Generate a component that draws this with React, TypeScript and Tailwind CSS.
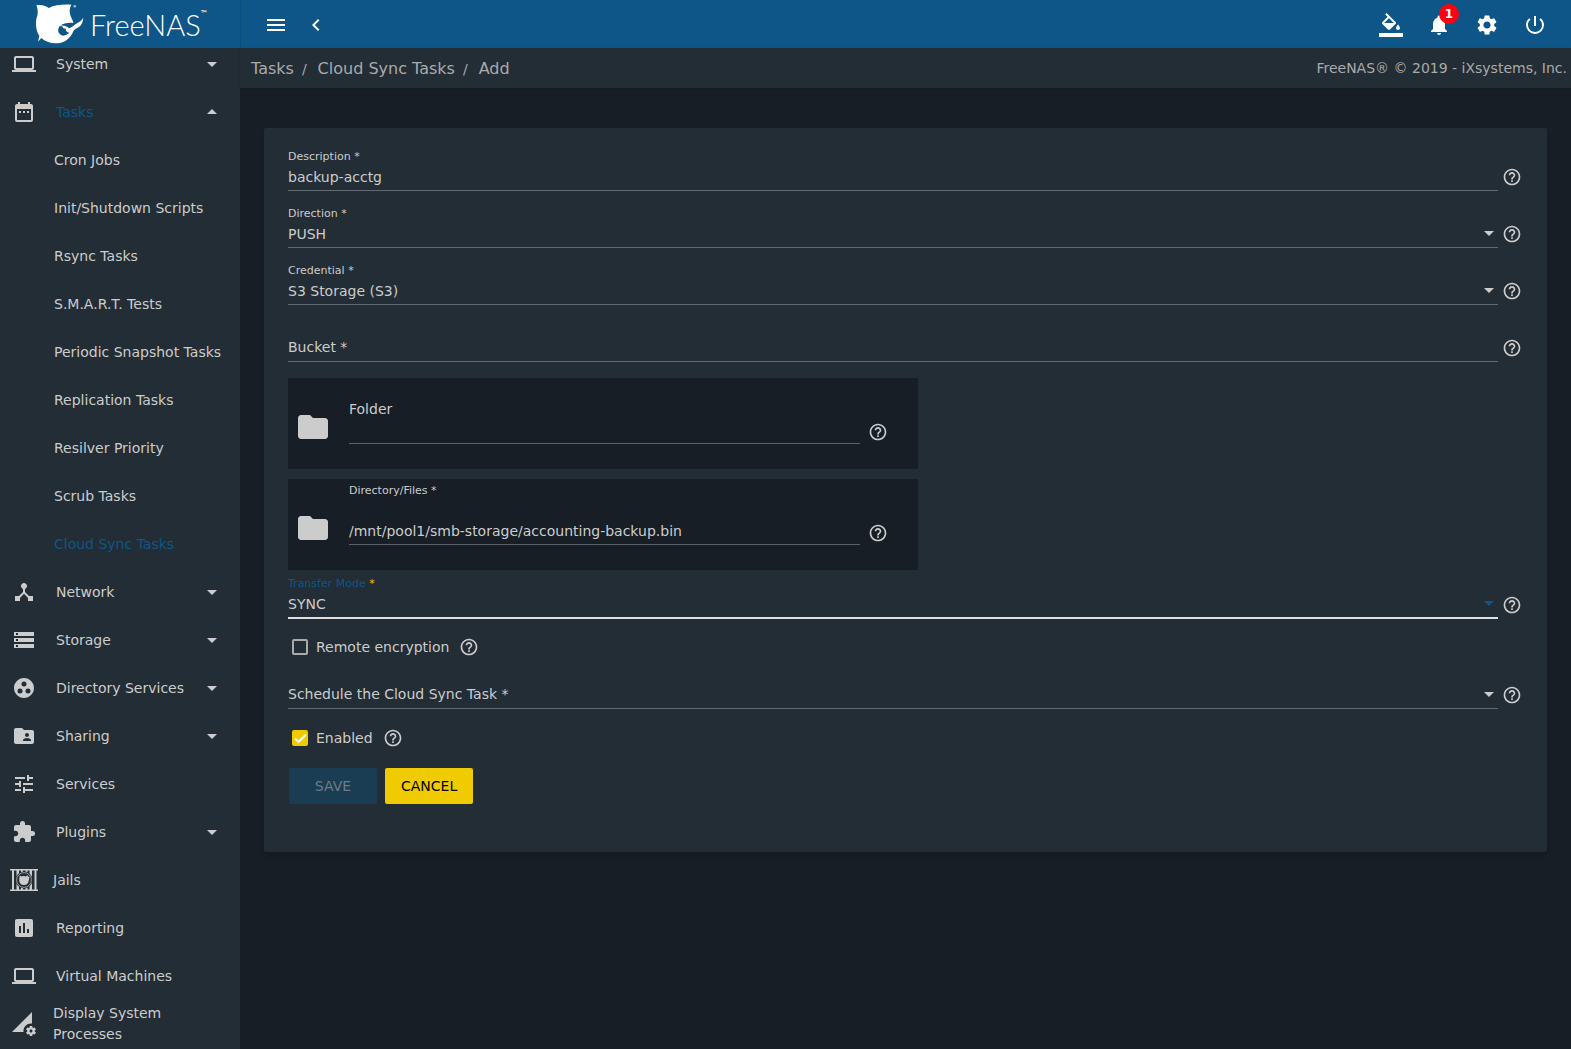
import { useState } from "react"
import type { ReactNode } from "react"
import type { IconType } from "react-icons"
import {
    MdArrowDropDown,
    MdArrowDropUp,
    MdAssessment,
    MdChevronLeft,
    MdDateRange,
    MdDeviceHub,
    MdExtension,
    MdFolder,
    MdFolderShared,
    MdGroupWork,
    MdHelpOutline,
    MdLaptop,
    MdMenu,
    MdNotifications,
    MdPermDataSetting,
    MdPowerSettingsNew,
    MdSettings,
    MdStorage,
    MdTune,
} from "react-icons/md"

const JailIcon = () => (
    <svg viewBox="0 0 28 24" className="h-6 w-7" fill="currentColor">
        <path d="M0 1h28v1.6H0zM0 21.4h28V23H0zM2 2h2v20H2zM6.5 2h2.5v20H6.5zM11 2h2v20h-2zM15.5 2h2v20h-2zM19.5 2H22v20h-2.5zM24.5 2h2v20h-2z" />
        <circle cx="14" cy="12" r="8.5" fill="#232d35" />
        <circle cx="14" cy="12" r="7.4" fill="none" stroke="currentColor" strokeWidth="1" opacity="0.7" />
        <path d="M9.5 7.5L12 8.5C13.5 7.8 15 8 16 8.6L17.5 7L18 9L19.5 8.2C19.3 10 19 11 18.8 12.5C18.4 15.5 16.5 17 14 17C11 17 9.2 15 9.2 12.4C9.2 10.500 9.8 9 9.500 7.500Z" />
    </svg>
)

const FillIcon = () => (
    <svg viewBox="0 0 24 24" className="size-6" fill="currentColor">
        <path d="M16.56 8.94L7.62 0 6.21 1.41l2.38 2.38-5.15 5.15c-.59.59-.59 1.54 0 2.12l5.5 5.5c.29.29.68.44 1.06.44s.77-.15 1.06-.44l5.5-5.5c.59-.58.59-1.53 0-2.12zM5.21 10L10 5.21 14.79 10H5.21zM19 11.5s-2 2.17-2 3.500c0 1.1.9 2 2 2s2-.9 2-2c0-1.33-2-3.5-2-3.5zM0 20h24v4H0z" />
    </svg>
)

const Logo = () => (
    <a href="#" className="flex h-12 w-60 shrink-0 items-center pl-9 text-white">
        <svg viewBox="108 8 146 122" className="h-10 w-12" fill="currentColor">
            <path d="M109 12C122 9 136 12 147 20C164 10 190 9 216 10C210 20 209 32 213 44C216 52 220 58 222 66C206 64 192 67 182 74C192 72 202 75 208 82C217 80 222 74 229 69C238 64 246 60 252 50C252 62 247 73 238 79C232 83 226 84 222 90C214 112 194 128 168 128C150 128 135 122 124 112L114 123L118 105C108 92 106 72 109 52C114 40 115 26 109 12Z" />
            <path d="M180 75C172 86 174 100 190 105C198 104 205 101 209 96C202 95 197 90 199 83C194 84 188 82 189 77C186 76 183 75 180 75Z" fill="#0d5687" />
            <circle cx="226" cy="15" r="4" opacity="0.6" />
        </svg>
        <span className="ml-1.5 font-[Lato] text-[29px] leading-none font-light">FreeNAS</span>
        <span className="mb-5 font-[Lato] text-[8px]">™</span>
    </a>
)

type NavItem = {
    label: string
    icon: IconType | (() => ReactNode)
    expandable?: boolean
    narrow?: boolean
    children?: string[]
}

const navItems: NavItem[] = [
    { label: "System", icon: MdLaptop, expandable: true },
    {
        label: "Tasks",
        icon: MdDateRange,
        expandable: true,
        children: [
            "Cron Jobs",
            "Init/Shutdown Scripts",
            "Rsync Tasks",
            "S.M.A.R.T. Tests",
            "Periodic Snapshot Tasks",
            "Replication Tasks",
            "Resilver Priority",
            "Scrub Tasks",
            "Cloud Sync Tasks",
        ],
    },
    { label: "Network", icon: MdDeviceHub, expandable: true },
    { label: "Storage", icon: MdStorage, expandable: true },
    { label: "Directory Services", icon: MdGroupWork, expandable: true },
    { label: "Sharing", icon: MdFolderShared, expandable: true },
    { label: "Services", icon: MdTune },
    { label: "Plugins", icon: MdExtension, expandable: true },
    { label: "Jails", icon: JailIcon, narrow: true },
    { label: "Reporting", icon: MdAssessment },
    { label: "Virtual Machines", icon: MdLaptop },
    { label: "Display System Processes", icon: MdPermDataSetting, narrow: true },
]

const Sidebar = () => (
    <nav className="w-60 shrink-0 overflow-hidden bg-[#232d35]">
        <ul className="-mt-2">
            {navItems.map(({ label, icon: Icon, expandable, narrow, children }) => (
                <li key={label}>
                    <a
                        href="#"
                        className={`flex h-12 items-center pr-4 ${children ? "text-[#0d5687]" : ""}`}
                    >
                        <span className="flex w-12 shrink-0 justify-center text-[#cccccc]">
                            <Icon className={label === "Jails" ? "" : "size-6"} />
                        </span>
                        <span className={`flex-1 leading-[21px] ${narrow ? "pl-[5px]" : "pl-2"}`}>{label}</span>
                        {expandable && (
                            <span className="text-[#cccccc]">
                                {children ? <MdArrowDropUp className="size-6" /> : <MdArrowDropDown className="size-6" />}
                            </span>
                        )}
                    </a>
                    {children && (
                        <ul>
                            {children.map((child) => (
                                <li key={child}>
                                    <a
                                        href="#"
                                        className={`flex h-12 items-center pl-[54px] ${child === "Cloud Sync Tasks" ? "text-[#0d5687]" : ""}`}
                                    >
                                        {child}
                                    </a>
                                </li>
                            ))}
                        </ul>
                    )}
                </li>
            ))}
        </ul>
    </nav>
)

const Help = ({ className = "" }: { className?: string }) => (
    <button type="button" aria-label="Help" className={`shrink-0 ${className}`}>
        <MdHelpOutline className="size-5" />
    </button>
)

type FieldProps = { id: string; label: string; value?: string; select?: boolean; focused?: boolean; className?: string }

const Field = ({ id, label, value = "", select, focused, className = "" }: FieldProps) => (
    <div className={`flex items-end gap-1 ${className}`}>
        <div className={`relative flex-1 pt-4 ${focused ? "border-b-2 border-[#e0e0e0]" : "border-b border-[#62696f]"}`}>
            <label
                htmlFor={id}
                className={`pointer-events-none absolute left-0 ${value ? "top-px text-[11px] leading-4" : "top-[15px] leading-[26px]"} ${focused ? "text-[#0d5687]" : ""}`}
            >
                {label} <span className={focused ? "text-[#f0cb00]" : ""}>*</span>
            </label>
            {select ? (
                <>
                    <select id={id} defaultValue={value} className="block h-[26px] w-full appearance-none bg-transparent outline-none">
                        <option value={value}>{value}</option>
                    </select>
                    <svg
                        viewBox="0 0 10 5"
                        className={`pointer-events-none absolute right-1 bottom-[11px] h-[5px] w-2.5 ${focused ? "text-[#0d5687]" : ""}`}
                        fill="currentColor"
                    >
                        <path d="M0 0h10L5 5z" />
                    </svg>
                </>
            ) : (
                <input id={id} defaultValue={value} className="block h-[26px] w-full bg-transparent outline-none" />
            )}
        </div>
        <Help className="mb-1" />
    </div>
)

const FileField = ({ id, label, value = "" }: { id: string; label: string; value?: string }) => (
    <div className="flex h-[91px] max-w-[630px] items-start bg-[#171e26] pr-[30px] pl-[7px]">
        <button type="button" aria-label="Browse" className="mt-[31px]">
            <MdFolder className="size-9" />
        </button>
        <div className="relative ml-[18px] flex-1 border-b border-[#5c6167] pt-[39px]">
            <label
                htmlFor={id}
                className={`pointer-events-none absolute left-0 ${value ? "top-1 text-[11px] leading-4" : "top-[18px] leading-[26px]"}`}
            >
                {label}
            </label>
            <input id={id} defaultValue={value} className="block h-[26px] w-full bg-transparent outline-none" />
        </div>
        <Help className="mt-11 ml-2" />
    </div>
)

const Checkbox = ({ id, label, defaultChecked = false }: { id: string; label: string; defaultChecked?: boolean }) => {
    const [checked, setChecked] = useState(defaultChecked)
    return (
        <div className="flex h-5 items-center pl-1">
            <span className="relative flex size-4">
                <input
                    id={id}
                    type="checkbox"
                    checked={checked}
                    onChange={(e) => setChecked(e.target.checked)}
                    className="size-4 appearance-none rounded-xs border-2 border-[#aaaaaa] checked:border-[#f0cb00] checked:bg-[#f0cb00]"
                />
                {checked && (
                    <svg viewBox="0 0 16 16" className="pointer-events-none absolute inset-0 size-4" fill="none" stroke="#ffffff" strokeWidth="2">
                        <path d="M3 8.5L6.5 12L14 4.5" />
                    </svg>
                )}
            </span>
            <label htmlFor={id} className="ml-2">
                {label}
            </label>
            <Help className="ml-2.5" />
        </div>
    )
}

export default function App() {
    return (
        <div className="flex min-h-screen flex-col bg-[#171e26] font-['DejaVu_Sans',sans-serif] text-sm text-[#cccccc]">
            <header className="flex h-12 items-center bg-[#0d5687] text-white">
                <Logo />
                <div className="flex h-12 flex-1 items-center border-l border-[#0b4d79] pt-0.5 pr-6 pl-[23px]">
                    <button aria-label="Menu">
                        <MdMenu className="size-6" />
                    </button>
                    <button aria-label="Collapse" className="ml-4">
                        <MdChevronLeft className="size-6" />
                    </button>
                    <div className="ml-auto flex items-center gap-6">
                        <button aria-label="Theme">
                            <FillIcon />
                        </button>
                        <button aria-label="Notifications" className="relative">
                            <MdNotifications className="size-6" />
                            <span className="absolute -top-[9px] -right-2 flex size-5 items-center justify-center rounded-full bg-[#ff0012] text-xs font-bold">
                                1
                            </span>
                        </button>
                        <button aria-label="Settings">
                            <MdSettings className="size-6" />
                        </button>
                        <button aria-label="Power">
                            <MdPowerSettingsNew className="size-6" />
                        </button>
                    </div>
                </div>
            </header>

            <div className="flex flex-1">
                <Sidebar />
                <main className="min-w-0 flex-1">
                    <div className="flex h-10 items-center bg-[#232d35] pr-1 pl-[11px] text-[#aaaaaa] shadow">
                        <div className="flex flex-1 items-center gap-2 pt-0.5 text-base">
                            <a href="#">Tasks</a>
                            <span className="mr-[3px] text-sm">/</span>
                            <a href="#">Cloud Sync Tasks</a>
                            <span className="mr-[3px] text-sm">/</span>
                            <a href="#">Add</a>
                        </div>
                        <span>FreeNAS® © 2019 - iXsystems, Inc.</span>
                    </div>

                    <form className="mx-6 mt-10 rounded-xs bg-[#232d35] pt-5 pr-[25px] pb-12 pl-6 shadow-md">
                        <div className="flex flex-col gap-[14px]">
                            <Field id="description" label="Description" value="backup-acctg" />
                            <Field id="direction" label="Direction" value="PUSH" select />
                            <Field id="credential" label="Credential" value="S3 Storage (S3)" select />
                            <Field id="bucket" label="Bucket" />
                        </div>
                        <div className="mt-4 flex flex-col gap-2.5">
                            <FileField id="folder" label="Folder" />
                            <FileField id="files" label="Directory/Files *" value="/mnt/pool1/smb-storage/accounting-backup.bin" />
                        </div>
                        <Field id="mode" label="Transfer Mode" value="SYNC" select focused className="mt-[5px] mb-[18px]" />
                        <Checkbox id="encryption" label="Remote encryption" />
                        <Field id="schedule" label="Schedule the Cloud Sync Task" select className="mt-[9px] mb-[19px]" />
                        <Checkbox id="enabled" label="Enabled" defaultChecked />
                        <div className="mt-5 flex gap-2 pl-px">
                            <button type="submit" disabled className="h-9 w-22 rounded-xs bg-[#1b3d54] text-[#6f7b84]">
                                SAVE
                            </button>
                            <button type="button" className="h-9 rounded-xs bg-[#f0cb00] px-4 text-black">
                                CANCEL
                            </button>
                        </div>
                    </form>
                </main>
            </div>
        </div>
    )
}
